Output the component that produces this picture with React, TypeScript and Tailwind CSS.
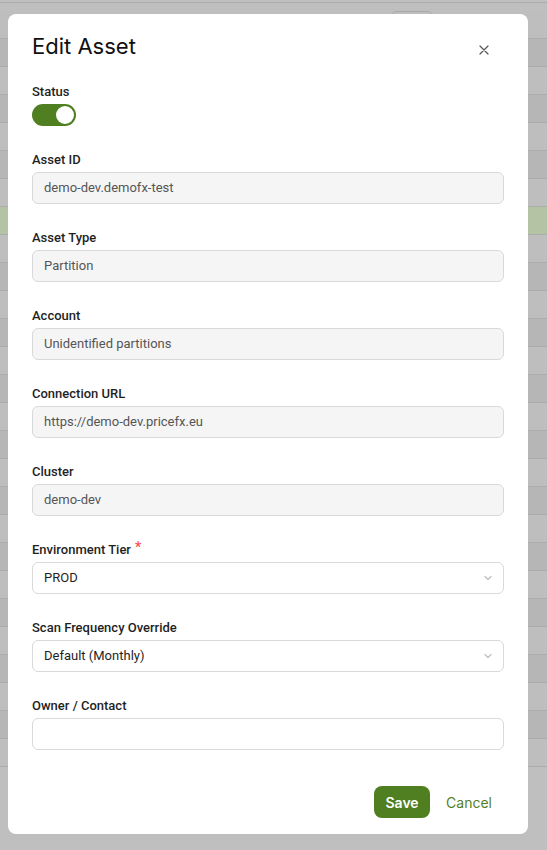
import React from "react";

const rows = Array.from({ length: 27 }, (_, i) => i);

const fields = [
  { label: "Asset ID", value: "demo-dev.demofx-test" },
  { label: "Asset Type", value: "Partition" },
  { label: "Account", value: "Unidentified partitions" },
  { label: "Connection URL", value: "https://demo-dev.pricefx.eu" },
  { label: "Cluster", value: "demo-dev" },
];

const Chevron: React.FC = () => (
  <svg width="10" height="10" viewBox="0 0 10 10" className="shrink-0">
    <polyline
      points="2,3.5 5,6.5 8,3.5"
      fill="none"
      stroke="#bfbfbf"
      strokeWidth="1.2"
      strokeLinecap="round"
      strokeLinejoin="round"
    />
  </svg>
);

const Label: React.FC<{ text: string; required?: boolean }> = ({ text, required }) => (
  <div className="h-[22px] leading-[24px] text-[13px] font-medium text-[#1f1f1f] flex items-start">
    {text}
    {required && <span className="text-[#ff4d4f] ml-1 text-[14px] leading-[18px]">*</span>}
  </div>
);

const App: React.FC = () => {
  return (
    <div className="relative w-[547px] h-[850px] overflow-hidden bg-[#bfbfbf] font-[family-name:Roboto,sans-serif]">
      {/* page behind the overlay */}
      <div className="h-[3px] border-b border-[#acacac]" />
      {rows.map((i) => (
        <div
          key={i}
          className={
            "h-[28px] border-b border-[#acacac] " +
            (i === 7 ? "bg-[#b3c3a4]" : i % 2 === 0 ? "bg-[#bebebe]" : "bg-[#b6b6b6]")
          }
        >
          {i === 0 && (
            <div className="ml-[391px] mt-[8px] w-[42px] h-[16px] rounded-md border border-[#a9a9a9]" />
          )}
        </div>
      ))}

      {/* modal */}
      <div className="absolute left-[8px] top-[14px] w-[520px] h-[820px] bg-white rounded-lg px-6 pt-[18px] pb-4 flex flex-col">
        <div className="flex items-start justify-between">
          <h2 className="text-[22px] leading-[28px] font-normal text-[#111] font-[family-name:Inter,sans-serif]">
            Edit Asset
          </h2>
          <button className="mt-[13px] mr-[15px] text-[#555]">
            <svg width="10" height="10" viewBox="0 0 10 10">
              <path d="M1 1 L9 9 M9 1 L1 9" stroke="#5a5a5a" strokeWidth="1.3" strokeLinecap="round" />
            </svg>
          </button>
        </div>

        <div className="mt-5 flex flex-col">
          <div className="mb-[22px]">
            <Label text="Status" />
            <div className="mt-[2px] w-[44px] h-[22px] rounded-full bg-[#4f7f21] flex items-center justify-end px-[2px]">
              <div className="w-[18px] h-[18px] rounded-full bg-white" />
            </div>
          </div>

          {fields.map((f) => (
            <div key={f.label} className="mb-[22px]">
              <Label text={f.label} />
              <div className="mt-[2px] h-[32px] rounded-md border border-[#d9d9d9] bg-[#f5f5f5] px-[11px] flex items-center text-[13px] text-[#555]">
                {f.value}
              </div>
            </div>
          ))}

          <div className="mb-[22px]">
            <Label text="Environment Tier" required />
            <div className="mt-[2px] h-[32px] rounded-md border border-[#d9d9d9] bg-white pl-[11px] pr-[10px] flex items-center justify-between text-[13px] text-[#1f1f1f]">
              <span>PROD</span>
              <Chevron />
            </div>
          </div>

          <div className="mb-[22px]">
            <Label text="Scan Frequency Override" />
            <div className="mt-[2px] h-[32px] rounded-md border border-[#d9d9d9] bg-white pl-[11px] pr-[10px] flex items-center justify-between text-[13px] text-[#1f1f1f]">
              <span>Default (Monthly)</span>
              <Chevron />
            </div>
          </div>

          <div className="mb-[22px]">
            <Label text="Owner / Contact" />
            <div className="mt-[2px] h-[32px] rounded-md border border-[#d9d9d9] bg-white" />
          </div>
        </div>

        <div className="mt-[14px] flex justify-end items-center font-[family-name:Inter,sans-serif]">
          <button className="h-[32px] w-[56px] rounded-lg bg-[#4f7f21] text-white text-[14px] font-semibold">
            Save
          </button>
          <button className="ml-1 h-[32px] px-3 text-[14px] font-normal text-[#567f1f]">
            Cancel
          </button>
        </div>
      </div>
    </div>
  );
};

export default App;
